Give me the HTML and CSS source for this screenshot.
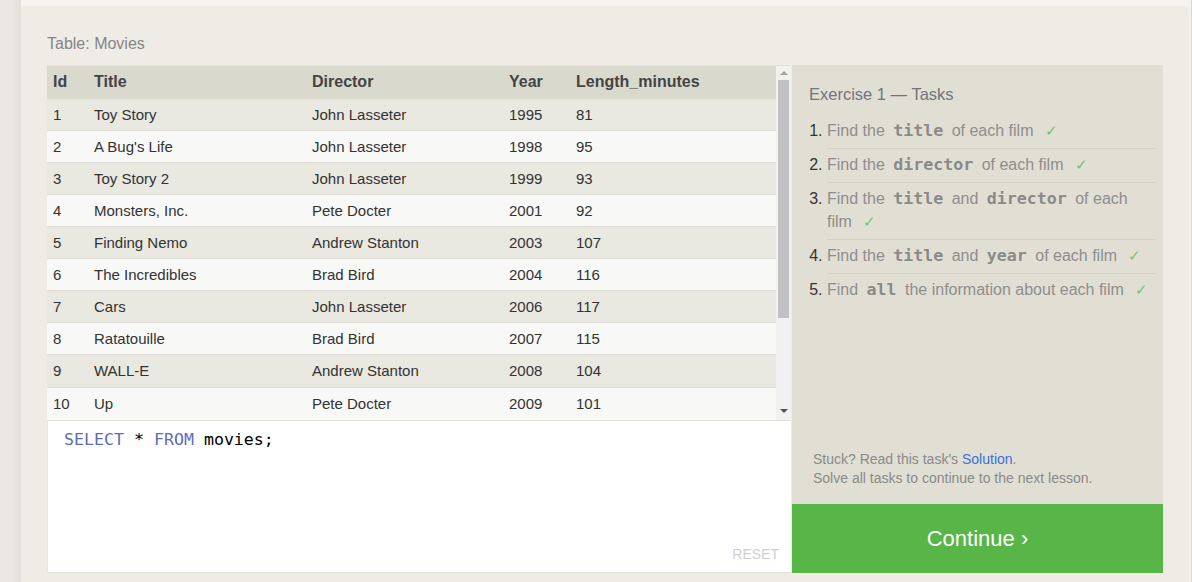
FILE: index.html
```html
<!DOCTYPE html>
<html>
<head>
<meta charset="utf-8">
<link rel="stylesheet" href="styles.css">
</head>
<body>
<div class="page">
  <div class="left-strip"></div>
  <div class="main">
    <div class="card">
      <div class="table-label">Table: Movies</div>
      <div class="workspace">
        <div class="left-col">
          <div class="table-box">
            <div class="table-scroll">
              <table class="data">
                <colgroup>
                  <col class="c-id"><col class="c-title"><col class="c-dir"><col class="c-year"><col>
                </colgroup>
                <thead>
                  <tr><th>Id</th><th>Title</th><th>Director</th><th>Year</th><th>Length_minutes</th></tr>
                </thead>
                <tbody>
                  <tr><td>1</td><td>Toy Story</td><td>John Lasseter</td><td>1995</td><td>81</td></tr>
                  <tr><td>2</td><td>A Bug's Life</td><td>John Lasseter</td><td>1998</td><td>95</td></tr>
                  <tr><td>3</td><td>Toy Story 2</td><td>John Lasseter</td><td>1999</td><td>93</td></tr>
                  <tr><td>4</td><td>Monsters, Inc.</td><td>Pete Docter</td><td>2001</td><td>92</td></tr>
                  <tr><td>5</td><td>Finding Nemo</td><td>Andrew Stanton</td><td>2003</td><td>107</td></tr>
                  <tr><td>6</td><td>The Incredibles</td><td>Brad Bird</td><td>2004</td><td>116</td></tr>
                  <tr><td>7</td><td>Cars</td><td>John Lasseter</td><td>2006</td><td>117</td></tr>
                  <tr><td>8</td><td>Ratatouille</td><td>Brad Bird</td><td>2007</td><td>115</td></tr>
                  <tr><td>9</td><td>WALL-E</td><td>Andrew Stanton</td><td>2008</td><td>104</td></tr>
                  <tr><td>10</td><td>Up</td><td>Pete Docter</td><td>2009</td><td>101</td></tr>
                  <tr><td>11</td><td>Toy Story 3</td><td>Lee Unkrich</td><td>2010</td><td>103</td></tr>
                </tbody>
              </table>
            </div>
            <div class="scrollbar">
              <div class="arrow-up"></div>
              <div class="thumb"></div>
              <div class="arrow-down"></div>
            </div>
          </div>
          <div class="editor">
            <div class="code"><span class="kw">SELECT</span> * <span class="kw">FROM</span> movies;</div>
            <div class="reset">RESET</div>
          </div>
        </div>
        <div class="tasks-panel">
          <div class="tasks-body">
            <div class="tasks-title">Exercise 1 — Tasks</div>
            <ol class="tasks">
              <li><span class="t">Find the <code>title</code> of each film <span class="check">✓</span></span></li>
              <li><span class="t">Find the <code>director</code> of each film <span class="check">✓</span></span></li>
              <li><span class="t">Find the <code>title</code> and <code>director</code> of each film <span class="check">✓</span></span></li>
              <li><span class="t">Find the <code>title</code> and <code>year</code> of each film <span class="check">✓</span></span></li>
              <li><span class="t">Find <code>all</code> the information about each film <span class="check">✓</span></span></li>
            </ol>
          </div>
          <div class="stuck">
            <div>Stuck? Read this task's <a class="sol" href="#">Solution</a>.</div>
            <div>Solve all tasks to continue to the next lesson.</div>
          </div>
          <div class="continue">Continue ›</div>
        </div>
      </div>
    </div>
  </div>
  <div class="right-strip"></div>
</div>
</body>
</html>
```

FILE: styles.css
```css
* { box-sizing: border-box; }
html, body { margin: 0; padding: 0; }
body {
  width: 1192px;
  height: 582px;
  overflow: hidden;
  background: #f5f4f1;
  font-family: "Liberation Sans", Arial, sans-serif;
}
.page {
  display: flex;
  height: 582px;
}
.left-strip {
  width: 21px;
  flex: none;
  background: linear-gradient(to right, #eae7e4 0, #e9e6e3 13px, #e3e0dc 20px, #e6e3df 21px);
}
.right-strip {
  width: 3px;
  flex: none;
  background: #f3f2ee;
  border-right: 1px solid #dad8d4;
}
.main {
  flex: 1;
  padding-top: 6px;
}
.card {
  background: #efece5;
  border-radius: 4px 4px 0 0;
  height: 600px;
  padding: 28px 26px 0 26px;
}
.table-label {
  font-size: 16px;
  line-height: 20px;
  color: #858585;
  margin-bottom: 11px;
}
.workspace {
  display: flex;
  gap: 1px;
}
.left-col {
  width: 744px;
  flex: none;
  display: flex;
  flex-direction: column;
}
.table-box {
  display: flex;
  height: 355px;
  border-top: 1px solid #e3e1d9;
}
.table-scroll {
  width: 729px;
  overflow: hidden;
}
.data {
  width: 729px;
  table-layout: fixed;
  border-collapse: separate;
  border-spacing: 0;
  color: #333;
}
.c-id { width: 41px; }
.c-title { width: 218px; }
.c-dir { width: 197px; }
.c-year { width: 67px; }
.data th {
  background: #dad9ce;
  text-align: left;
  font-size: 16px;
  font-weight: bold;
  color: #444;
  line-height: 31px;
  padding: 0 6px 2px 6px;
  white-space: nowrap;
}
.data td {
  font-size: 15px;
  line-height: 31px;
  padding: 0 6px;
  border-bottom: 1px solid #dfddd6;
  white-space: nowrap;
}
.data tbody tr:nth-child(odd) td { background: #e9e8e1; }
.data tbody tr:nth-child(even) td { background: #f8f8f6; }
.data tbody tr:nth-child(n+9) td { line-height: 32px; }
.scrollbar {
  width: 15px;
  flex: none;
  background: #f1f1f1;
  display: flex;
  flex-direction: column;
  align-items: center;
  padding: 0 2px;
}
.arrow-up {
  margin-top: 5px;
  width: 0; height: 0;
  border-left: 4px solid transparent;
  border-right: 4px solid transparent;
  border-bottom: 4px solid #a3a3a3;
}
.thumb {
  margin-top: 5px;
  width: 11px;
  height: 238px;
  background: #c1c1c1;
}
.arrow-down {
  margin-top: auto;
  margin-bottom: 7px;
  width: 0; height: 0;
  border-left: 4px solid transparent;
  border-right: 4px solid transparent;
  border-top: 4px solid #505050;
}
.editor {
  height: 153px;
  background: #fff;
  border-left: 1px solid #e6e4de;
  border-bottom: 1px solid #e2e0da;
  border-top: 1px solid #e4e2dc;
  display: flex;
  flex-direction: column;
  justify-content: space-between;
  padding: 7px 12px 9px 16px;
}
.code {
  font-family: "DejaVu Sans Mono", monospace;
  font-size: 16.6px;
  line-height: 24px;
  color: #000;
}
.kw { color: #5d6cb7; }
.reset {
  align-self: flex-end;
  font-size: 14px;
  color: #cfcfcf;
  line-height: 18px;
}
.tasks-panel {
  width: 371px;
  flex: none;
  height: 508px;
  background: #e1dfd4;
  display: flex;
  flex-direction: column;
}
.tasks-body {
  flex: 1;
  padding: 19px 7px 0 17px;
}
.tasks-title {
  font-size: 16.5px;
  line-height: 20px;
  color: #70747c;
  margin-bottom: 11px;
}
.tasks {
  margin: 0;
  padding-left: 18px;
  font-size: 16px;
}
.tasks li {
  line-height: 23px;
  padding: 4px 0 6px 0;
  border-bottom: 1px solid #d4d2c6;
  color: #333;
}
.tasks li:last-child { border-bottom: none; }
.tasks li::marker { color: #333; }
.tasks .t { color: #8e8e8e; }
.tasks code {
  font-family: "DejaVu Sans Mono", monospace;
  font-weight: bold;
  font-size: 16.6px;
  color: #8a8a8a;
  padding: 0 4px;
}
.check {
  color: #73c476;
  font-size: 15px;
  margin-left: 7px;
}
.stuck {
  padding: 0 0 16px 21px;
  font-size: 14px;
  line-height: 19px;
  color: #8a8a8a;
}
.sol {
  color: #3c6ee2;
  text-decoration: none;
}
.continue {
  height: 69px;
  background: #58b548;
  color: #fff;
  font-size: 22px;
  display: flex;
  align-items: center;
  justify-content: center;
}
```
